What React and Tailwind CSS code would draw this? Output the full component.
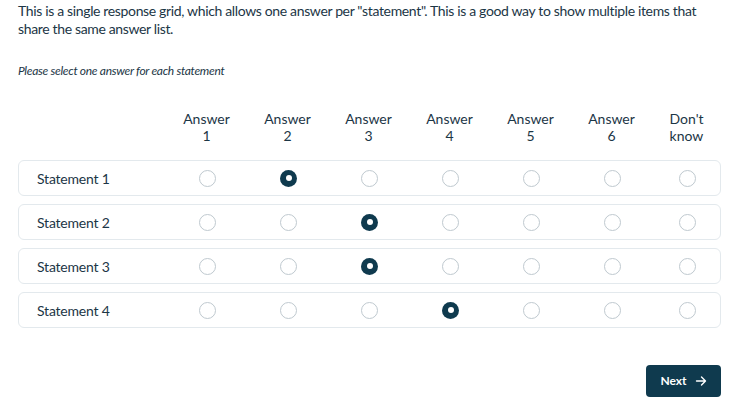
import React, { useState } from 'react'

const answers = ['Answer\n1', 'Answer\n2', 'Answer\n3', 'Answer\n4', 'Answer\n5', 'Answer\n6', "Don't\nknow"]
const statements = ['Statement 1', 'Statement 2', 'Statement 3', 'Statement 4']

function Radio({ checked, onClick }) {
  return (
    <button
      onClick={onClick}
      className={
        checked
          ? 'w-[17px] h-[17px] rounded-full bg-[#0f3a4e] flex items-center justify-center'
          : 'w-[17px] h-[17px] rounded-full border-[1.5px] border-[#bfc9cf] bg-white'
      }
    >
      {checked && <span className="w-[6px] h-[6px] rounded-full bg-white" />}
    </button>
  )
}

export default function App() {
  const [picked, setPicked] = useState([1, 2, 2, 3])
  const grid = 'grid grid-cols-[148px_repeat(6,81px)_69px] items-center'

  return (
    <div className="w-[752px] h-[412px] bg-white text-[#1c3646] font-['Lato',sans-serif] px-[18px] pt-[2px]">
      <p className="w-[703px] text-[14px] leading-[18px] tracking-[-0.35px]">
        This is a single response grid, which allows one answer per "statement". This is a good way to show multiple items that share the same answer list.
      </p>
      <p className="mt-[25px] text-[12px] leading-4 italic tracking-[-0.3px]">Please select one answer for each statement</p>

      <div className={`${grid} w-[703px] mt-[31px] text-[14px] leading-[17px] text-center`}>
        <div />
        {answers.map((a) => (
          <div key={a} className="whitespace-pre-line">{a}</div>
        ))}
      </div>

      <div className="w-[703px] mt-[16px] flex flex-col gap-2">
        {statements.map((s, r) => (
          <div key={s} className={`${grid} h-9 border border-[#e3e9ed] rounded-md text-[14px] tracking-[-0.2px]`}>
            <div className="pl-[18px]">{s}</div>
            {answers.map((a, c) => (
              <div key={a} className="flex justify-center">
                <Radio
                  checked={picked[r] === c}
                  onClick={() => setPicked(picked.map((p, i) => (i === r ? c : p)))}
                />
              </div>
            ))}
          </div>
        ))}
      </div>

      <div className="w-[703px] flex justify-end mt-[37px]">
        <button className="w-[75px] h-8 rounded bg-[#0f3a4e] text-white text-[12px] font-bold flex items-center justify-center gap-2">
          Next
          <svg width="12" height="12" viewBox="0 0 12 12" fill="none" stroke="white" strokeWidth="1.4" strokeLinecap="round" strokeLinejoin="round">
            <path d="M1.5 6h9M6.5 2l4 4-4 4" />
          </svg>
        </button>
      </div>
    </div>
  )
}
